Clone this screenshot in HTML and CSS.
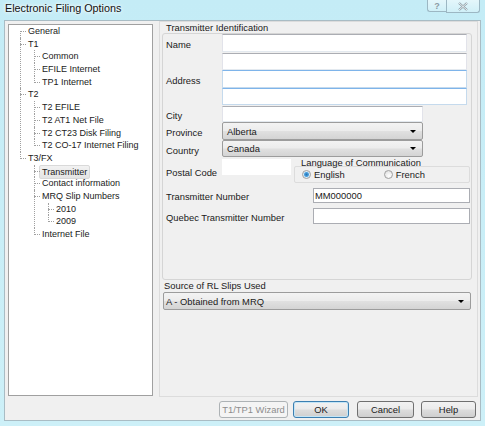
FILE: index.html
```
<!DOCTYPE html>
<html lang="en">
<head>
    <meta charset="UTF-8">
    <title>Electronic Filing Options</title>
    <link rel="stylesheet" href="styles.css">
</head>
<body>
    <div class="titlebar">
        <span class="title">Electronic Filing Options</span>
        <div class="caption-btns">
            <span class="cbtn help">?</span>
            <span class="cbtn close">
                <svg width="12" height="9" viewBox="0 0 12 9"><path d="M2 1 L10 8 M10 1 L2 8" stroke="#8a9aa3" stroke-width="2.2" fill="none"/><path d="M2 1 L10 8 M10 1 L2 8" stroke="#f4f8fa" stroke-width="0.9" fill="none"/></svg>
            </span>
        </div>
    </div>

    <div class="client">
        <div class="main">
            <div class="tree">
                <ul class="root">
                    <li class="first"><span class="node">General</span></li>
                    <li><span class="node">T1</span>
                        <ul>
                            <li><span class="node">Common</span></li>
                            <li><span class="node">EFILE Internet</span></li>
                            <li><span class="node">TP1 Internet</span></li>
                        </ul>
                    </li>
                    <li><span class="node">T2</span>
                        <ul>
                            <li><span class="node">T2 EFILE</span></li>
                            <li><span class="node">T2 AT1 Net File</span></li>
                            <li><span class="node">T2 CT23 Disk Filing</span></li>
                            <li><span class="node">T2 CO-17 Internet Filing</span></li>
                        </ul>
                    </li>
                    <li><span class="node">T3/FX</span>
                        <ul>
                            <li><span class="node"><span class="selected">Transmitter</span></span></li>
                            <li><span class="node">Contact information</span></li>
                            <li><span class="node">MRQ Slip Numbers</span>
                                <ul>
                                    <li><span class="node">2010</span></li>
                                    <li><span class="node">2009</span></li>
                                </ul>
                            </li>
                            <li><span class="node">Internet File</span></li>
                        </ul>
                    </li>
                </ul>
            </div>

            <div class="panel">
                <div class="grp-title">Transmitter Identification</div>
                <div class="grp">
                    <div class="ident">
                        <label class="lbl">Name</label>
                        <div class="edit h18"></div>
                        <span></span>
                        <div class="edit h17 gap1"></div>
                        <label class="lbl">Address</label>
                        <div class="edit h18 blue"></div>
                        <span></span>
                        <div class="edit h17 blue"></div>
                        <label class="lbl">City</label>
                        <div class="edit h16 gap1 short"></div>
                        <label class="lbl">Province</label>
                        <div class="combo h18 short"><span>Alberta</span><i class="arrow"></i></div>
                        <label class="lbl">Country</label>
                        <div class="combo h17 short"><span>Canada</span><i class="arrow"></i></div>
                    </div>

                    <div class="postal-row">
                        <label class="lbl postal-lbl">Postal Code</label>
                        <div class="postal"></div>
                        <div class="lang">
                            <div class="lang-title">Language of Communication</div>
                            <div class="lang-box">
                                <span class="radio checked"></span><span class="radio-text">English</span>
                                <span class="radio french"></span><span class="radio-text">French</span>
                            </div>
                        </div>
                    </div>

                    <div class="num-row">
                        <label class="num-lbl">Transmitter Number</label>
                        <div class="edit num h15">MM000000</div>
                    </div>
                    <div class="num-row">
                        <label class="num-lbl">Quebec Transmitter Number</label>
                        <div class="edit num h16"></div>
                    </div>
                </div>

                <div class="src-title">Source of RL Slips Used</div>
                <div class="combo h18 wide"><span>A - Obtained from MRQ</span><i class="arrow"></i></div>
            </div>
        </div>

        <div class="buttons">
            <button class="btn wizard">T1/TP1 Wizard</button>
            <button class="btn ok">OK</button>
            <button class="btn cancel">Cancel</button>
            <button class="btn help-btn">Help</button>
        </div>
    </div>
</body>
</html>
```
FILE: styles.css
```
body {
    margin: 0;
    width: 485px;
    height: 426px;
    overflow: hidden;
    background: linear-gradient(#c4ecf6, #cdf0f8);
    font-family: "Liberation Sans", Arial, sans-serif;
    font-size: 9px;
    color: #1a1a1a;
}
.titlebar {
    height: 20px;
    display: flex;
    justify-content: space-between;
}
.title {
    padding-left: 5px;
    line-height: 17px;
    font-size: 10.8px;
    color: #111;
    text-shadow: 0 0 5px #fff, 0 0 3px #fff;
}
.caption-btns {
    display: flex;
    align-items: flex-start;
    margin-right: 5px;
}
.cbtn {
    display: flex;
    align-items: center;
    justify-content: center;
    border: 1px solid #9cb7c3;
    border-top: none;
    background: linear-gradient(rgba(255,255,255,0.55), rgba(255,255,255,0.2));
    color: #8a9aa3;
}
.help {
    width: 18px;
    height: 11px;
    border-radius: 0 0 0 3px;
    border-right: none;
    font-size: 9px;
    font-weight: bold;
}
.close {
    width: 32px;
    height: 12px;
    border-radius: 0 0 3px 0;
}
.client {
    margin: 0 4px 0 4px;
    height: 399px;
    border: 1px solid #a9bcc4;
    background: #f0f0f0;
}
.main {
    display: flex;
    align-items: flex-start;
    height: 376px;
}
.tree {
    margin: 3px 0 0 3px;
    width: 143px;
    height: 370px;
    border: 1px solid #a0a0a0;
    background: #fff;
}
.tree ul {
    list-style: none;
    margin: 0 0 0 6px;
    padding: 0;
}
.tree ul.root {
    margin: 0 0 0 11px;
}
.tree li {
    position: relative;
    padding-left: 8px;
}
.tree li::before {
    content: "";
    position: absolute;
    left: 0;
    top: 6px;
    width: 6px;
    border-top: 1px dotted #a0a0a0;
}
.tree li::after {
    content: "";
    position: absolute;
    left: 0;
    top: 0;
    bottom: 0;
    border-left: 1px dotted #a0a0a0;
}
.tree li:last-child::after {
    bottom: auto;
    height: 7px;
}
.tree li.first::after {
    top: 6px;
}
.node {
    display: block;
    height: 12.7px;
    line-height: 12.7px;
    white-space: nowrap;
}
.selected {
    display: inline-block;
    margin-left: -3px;
    padding: 0 2px;
    height: 12px;
    line-height: 12px;
    border: 1px solid #d9d9d9;
    border-radius: 2px;
    background: linear-gradient(#f2f2f2, #e4e4e4);
}
.panel {
    margin-left: 6px;
    width: 317px;
    height: 374px;
    border: 1px solid #dcdcdc;
    font-size: 9.4px;
}
.grp-title {
    padding-left: 6px;
    height: 11px;
    line-height: 11px;
}
.grp {
    margin-left: 2px;
    width: 308px;
    height: 245px;
    border: 1px solid #d5d5d5;
    border-radius: 3px;
}
.ident {
    display: grid;
    grid-template-columns: 59px auto;
}
.lbl {
    padding: 3px 0 0 3px;
    align-self: center;
}
.edit {
    box-sizing: border-box;
    width: 245px;
    background: #fff;
    border: 1px solid #e2e3ea;
    border-top-color: #abadb3;
    border-bottom-color: #e3e9ef;
}
.edit.blue {
    border-color: #c5daed;
    border-top-color: #7eb4ea;
}
.h18 { height: 18px; }
.h17 { height: 17px; }
.h16 { height: 16px; }
.h15 { height: 15px; }
.gap1 { margin-top: 1px; }
.short { width: 201px; }
.combo {
    box-sizing: border-box;
    display: flex;
    align-items: center;
    justify-content: space-between;
    padding: 0 6px 0 4px;
    border: 1px solid #9c9c9c;
    border-radius: 2px;
    background: linear-gradient(#f3f3f3 0%, #ececec 48%, #e0e0e0 52%, #d4d4d4 100%);
}
.combo.wide {
    margin: 1px 0 0 3px;
    width: 308px;
    padding-left: 2px;
}
.arrow {
    width: 0;
    height: 0;
    border-left: 3px solid transparent;
    border-right: 3px solid transparent;
    border-top: 3px solid #000;
}
.postal-row {
    display: flex;
    align-items: flex-start;
}
.postal-lbl {
    width: 56px;
    padding-top: 5px;
}
.postal {
    margin-top: 2px;
    width: 69px;
    height: 16px;
    background: #fff;
}
.lang {
    margin-left: 3px;
    width: 176px;
}
.lang-title {
    padding-left: 7px;
    height: 10px;
    line-height: 10px;
    margin-top: 1px;
}
.lang-box {
    box-sizing: border-box;
    height: 17px;
    margin-top: -2px;
    border: 1px solid #dcdcdc;
    border-radius: 2px;
    display: flex;
    align-items: center;
    padding-left: 7px;
}
.radio {
    box-sizing: border-box;
    width: 9px;
    height: 9px;
    border-radius: 50%;
    border: 1px solid #a0a0a0;
    background: radial-gradient(circle at 60% 70%, #fff, #dadada);
}
.radio.checked {
    background: radial-gradient(circle, #2a73b2 0, #4aa0de 2px, #d9ecf9 3px, #eeeeee 4px);
}
.radio.french {
    margin-left: 39px;
}
.radio-text {
    margin-left: 3px;
}
.num-row {
    display: flex;
    align-items: center;
    margin-top: 5px;
}
.num-lbl {
    width: 147px;
    padding: 2px 0 0 3px;
}
.edit.num {
    width: 157px;
    padding-left: 1px;
    line-height: 13px;
    border-color: #abadb3;
}
.src-title {
    padding-left: 4px;
    height: 10px;
    line-height: 10px;
    margin-top: 1px;
}
.buttons {
    display: flex;
    justify-content: flex-end;
    margin: 4px 4px 0 0;
}
.btn {
    height: 17px;
    padding: 0;
    font-family: "Liberation Sans", Arial, sans-serif;
    font-size: 9.4px;
    color: #1a1a1a;
    border: 1px solid #707070;
    border-radius: 3px;
    background: linear-gradient(#f2f2f2 0%, #ebebeb 48%, #dddddd 52%, #cfcfcf 100%);
}
.wizard {
    width: 69px;
    color: #8d8d8d;
    border-color: #adb2b5;
    background: #f4f4f4;
}
.ok {
    width: 56px;
    margin-left: 5px;
    border-color: #3c7fb1;
    box-shadow: inset 0 0 0 1px #c4e5f6;
}
.cancel {
    width: 57px;
    margin-left: 8px;
}
.help-btn {
    width: 55px;
    margin-left: 7px;
}
```
